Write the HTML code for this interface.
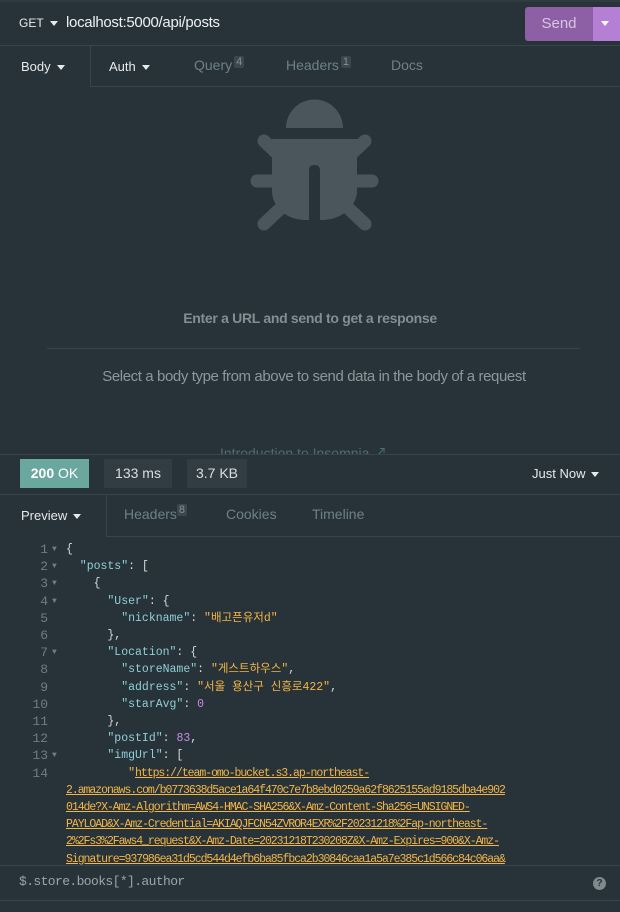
<!DOCTYPE html>
<html><head><meta charset="utf-8"><style>
*{margin:0;padding:0;box-sizing:border-box}
body{width:620px;height:912px;background:#283339;font-family:"Liberation Sans","Noto Sans CJK KR",sans-serif;position:relative;overflow:hidden;color:#cfd6d9}
.a{position:absolute}
.hl{position:absolute;left:0;right:0;height:1px;background:#37444b}
.tri{display:inline-block;width:0;height:0;border-left:4px solid transparent;border-right:4px solid transparent;border-top:5px solid #e6eaec;vertical-align:middle;margin-left:6px}
.badge{position:absolute;top:-5px;background:#3a474e;color:#7f9096;font-size:11px;padding:0 2px;border-radius:2px;line-height:14px}
.code{font-family:"Liberation Mono","Noto Sans CJK KR",monospace;font-size:11.5px;line-height:17.2px}
.pre{white-space:pre}
.ln{position:absolute;width:48px;text-align:right;color:#6f7c82;font-size:13px}
.fd{position:absolute;left:52px;color:#6f7c82;font-size:8px}
.k{color:#8fcfd6}.s{color:#f2b547}.n{color:#c88ae6}.p{color:#d4d9db}
.u{color:#f2b547;text-decoration:underline;letter-spacing:-1.05px}
</style></head><body>
<div class="a" style="left:0;top:0;width:620px;height:2px;background:#2f3b41"></div>
<div class="a" style="left:19px;top:16px;font-size:12px;color:#e6eaec">GET<span class="tri"></span></div>
<div class="a" style="left:66px;top:14px;font-size:15px;color:#eef1f2;letter-spacing:-0.3px">localhost:5000/api/posts</div>
<div class="a" style="left:525px;top:7px;width:68px;height:34px;background:#8d5fa5;border-radius:3px 0 0 3px;color:#d8c6e2;font-size:15px;text-align:center;line-height:33px">Send</div>
<div class="a" style="left:593px;top:7px;width:27px;height:34px;background:#b57fd6"><span class="tri" style="margin:14px 0 0 8px;border-top-color:#fff"></span></div>
<div class="hl" style="top:45px"></div>
<div class="a" style="left:21px;top:59px;font-size:13px;color:#e6eaec">Body<span class="tri"></span></div>
<div class="a" style="left:90px;top:45px;width:1px;height:41px;background:#37444b"></div>
<div class="hl" style="top:86px;left:90px"></div>
<div class="a" style="left:109px;top:59px;font-size:13px;color:#e6eaec">Auth<span class="tri"></span></div>
<div class="a" style="left:194px;top:57px;font-size:14px;color:#6d8187">Query<span class="badge" style="position:relative;top:-5px;margin-left:2px">4</span></div>
<div class="a" style="left:286px;top:57px;font-size:14px;color:#6d8187">Headers<span class="badge" style="position:relative;top:-5px;margin-left:2px">1</span></div>
<div class="a" style="left:391px;top:57px;font-size:14px;color:#6d8187">Docs</div>
<svg class="a" style="left:240px;top:90px" width="140" height="150" viewBox="0 0 140 150">
<g fill="#4b565c" stroke="#4b565c">
<path d="M46 38 A28 28 0 0 1 103 38 Z" stroke="none"/>
<path d="M32 49 H117 V100 C117 117 101 130 81 130 H80 V80 Q80 75 75 75 H73 Q68 75 68 80 V130 H68 C46 130 32 117 32 100 Z" stroke="none"/>
<path d="M32 49 H117 V100 C117 117 101 130 81 130 H80 V80 Q80 75 75 75 H74 Q69 75 69 80 V130 H66 C46 130 32 117 32 100 Z" stroke="none"/>
<g stroke-width="13" stroke-linecap="round" fill="none">
<line x1="24" y1="51" x2="42" y2="68"/><line x1="125" y1="51" x2="107" y2="68"/>
<line x1="17" y1="91" x2="34" y2="91"/><line x1="116" y1="91" x2="132" y2="91"/>
<line x1="24" y1="134" x2="42" y2="117"/><line x1="125" y1="134" x2="107" y2="117"/>
</g></g></svg>
<div class="a" style="left:0;width:620px;top:310px;text-align:center;font-size:14px;font-weight:bold;color:#838e93;letter-spacing:-0.3px">Enter a URL and send to get a response</div>
<div class="a" style="left:47px;width:533px;top:348px;height:1px;background:#37444b"></div>
<div class="a" style="left:0;width:628px;top:368px;text-align:center;font-size:15px;color:#8c979c;letter-spacing:-0.4px">Select a body type from above to send data in the body of a request</div>
<div class="a" style="left:220px;top:443px;font-size:14px;color:#4c6e72;height:11px;overflow:hidden">Introduction to Insomnia ↗</div>
<div class="hl" style="top:454px"></div>
<div class="a" style="left:20px;top:459px;width:69px;height:29px;background:#6aa79e;color:#fff;font-size:14px;line-height:29px;text-align:center"><b>200</b> OK</div>
<div class="a" style="left:104px;top:459px;width:68px;height:29px;background:#313d43;color:#d9dee0;font-size:14px;line-height:29px;text-align:center">133 ms</div>
<div class="a" style="left:187px;top:459px;width:60px;height:29px;background:#313d43;color:#d9dee0;font-size:14px;line-height:29px;text-align:center">3.7 KB</div>
<div class="a" style="left:532px;top:466px;font-size:13px;color:#e6eaec">Just Now<span class="tri"></span></div>
<div class="hl" style="top:494px"></div>
<div class="a" style="left:21px;top:508px;font-size:13px;color:#e6eaec">Preview<span class="tri"></span></div>
<div class="a" style="left:106px;top:494px;width:1px;height:42px;background:#37444b"></div>
<div class="hl" style="top:536px;left:106px"></div>
<div class="a" style="left:124px;top:506px;font-size:14px;color:#6d8187">Headers<span class="badge" style="position:relative;top:-6px">8</span></div>
<div class="a" style="left:226px;top:506px;font-size:14px;color:#6d8187">Cookies</div>
<div class="a" style="left:312px;top:506px;font-size:14px;color:#6d8187">Timeline</div>
<div class="a code" style="left:0;top:541px;width:620px;height:324px;overflow:hidden">
<div class="ln" style="top:0">1</div><div class="fd" style="top:0">▼</div>
<div class="ln" style="top:17.2px">2</div><div class="fd" style="top:17.2px">▼</div>
<div class="ln" style="top:34.4px">3</div><div class="fd" style="top:34.4px">▼</div>
<div class="ln" style="top:51.6px">4</div><div class="fd" style="top:51.6px">▼</div>
<div class="ln" style="top:68.8px">5</div>
<div class="ln" style="top:86px">6</div>
<div class="ln" style="top:103.2px">7</div><div class="fd" style="top:103.2px">▼</div>
<div class="ln" style="top:120.4px">8</div>
<div class="ln" style="top:137.6px">9</div>
<div class="ln" style="top:154.8px">10</div>
<div class="ln" style="top:172px">11</div>
<div class="ln" style="top:189.2px">12</div>
<div class="ln" style="top:206.4px">13</div><div class="fd" style="top:206.4px">▼</div>
<div class="ln" style="top:223.6px">14</div>
<div class="pre" style="position:absolute;left:66px;top:0"><span class="p">{</span>
<span class="k">  "posts"</span><span class="p">: [</span>
<span class="p">    {</span>
<span class="k">      "User"</span><span class="p">: {</span>
<span class="k">        "nickname"</span><span class="p">: </span><span class="s">"배고픈유저d"</span>
<span class="p">      },</span>
<span class="k">      "Location"</span><span class="p">: {</span>
<span class="k">        "storeName"</span><span class="p">: </span><span class="s">"게스트하우스"</span><span class="p">,</span>
<span class="k">        "address"</span><span class="p">: </span><span class="s">"서울 용산구 신흥로422"</span><span class="p">,</span>
<span class="k">        "starAvg"</span><span class="p">: </span><span class="n">0</span>
<span class="p">      },</span>
<span class="k">      "postId"</span><span class="p">: </span><span class="n">83</span><span class="p">,</span>
<span class="k">      "imgUrl"</span><span class="p">: [</span>
<span class="s">         "</span><span class="u">https://team-omo-bucket.s3.ap-northeast-</span></div>
<div class="pre" style="position:absolute;left:66px;top:240.8px"><span class="u">2.amazonaws.com/b0773638d5ace1a64f470c7e7b8ebd0259a62f8625155ad9185dba4e902</span>
<span class="u">014de?X-Amz-Algorithm=AWS4-HMAC-SHA256&amp;X-Amz-Content-Sha256=UNSIGNED-</span>
<span class="u">PAYLOAD&amp;X-Amz-Credential=AKIAQJFCN54ZVROR4EXR%2F20231218%2Fap-northeast-</span>
<span class="u">2%2Fs3%2Faws4_request&amp;X-Amz-Date=20231218T230208Z&amp;X-Amz-Expires=900&amp;X-Amz-</span>
<span class="u">Signature=937986ea31d5cd544d4efb6ba85fbca2b30846caa1a5a7e385c1d566c84c06aa&amp;</span></div>
</div>
<div class="hl" style="top:865px"></div>
<div class="a code pre" style="left:19px;top:873px;font-size:13px;color:#9aa5aa;letter-spacing:-0.6px">$.store.books[*].author</div>
<div class="a" style="left:593px;top:877px;width:13px;height:13px;border-radius:50%;background:#7f8a8f;color:#283339;font-size:10px;font-weight:bold;text-align:center;line-height:13px">?</div>
<div class="hl" style="top:900px"></div>
</body></html>
